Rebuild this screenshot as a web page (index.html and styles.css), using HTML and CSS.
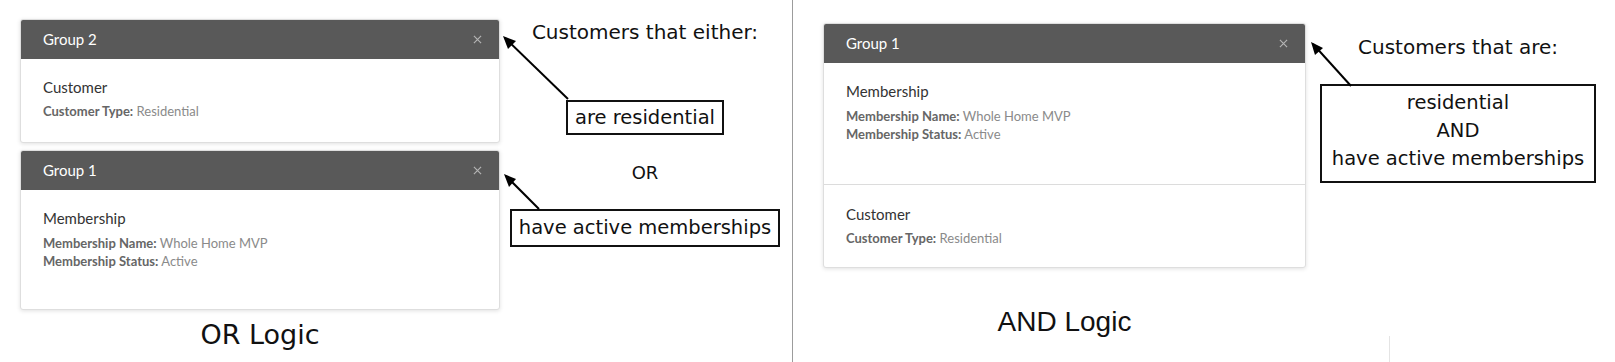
FILE: index.html
```html
<!DOCTYPE html>
<html lang="en">
<head>
    <meta charset="UTF-8">
    <meta name="viewport" content="width=device-width, initial-scale=1.0">
    <title>Segment Logic - OR vs AND</title>
    <link rel="stylesheet" href="styles.css">
</head>
<body>
    <div class="board">
        <!-- OR logic: two separate groups -->
        <section class="panel panel-or">
            <div class="stack">
                <div class="group-card">
                    <div class="group-header">
                        <span>Group 2</span>
                        <svg class="close-icon" viewBox="0 0 10 10"><path d="M1 1 L9 9 M9 1 L1 9"/></svg>
                    </div>
                    <div class="group-section">
                        <div class="section-title">Customer</div>
                        <div class="detail"><b>Customer Type:</b> Residential</div>
                    </div>
                </div>
                <div class="group-card">
                    <div class="group-header">
                        <span>Group 1</span>
                        <svg class="close-icon" viewBox="0 0 10 10"><path d="M1 1 L9 9 M9 1 L1 9"/></svg>
                    </div>
                    <div class="group-section tall short">
                        <div class="section-title">Membership</div>
                        <div class="detail first"><b>Membership Name:</b> Whole Home MVP</div>
                        <div class="detail"><b>Membership Status:</b> Active</div>
                    </div>
                </div>
                <div class="caption caption-or">OR Logic</div>
            </div>
            <div class="notes notes-or">
                <div class="note-title">Customers that either:</div>
                <div class="note-box box-residential">are residential</div>
                <div class="note-or">OR</div>
                <div class="note-box box-members">have active memberships</div>
            </div>
        </section>

        <!-- AND logic: one group with two filters -->
        <section class="panel panel-and">
            <div class="stack stack-and">
                <div class="group-card">
                    <div class="group-header">
                        <span>Group 1</span>
                        <svg class="close-icon" viewBox="0 0 10 10"><path d="M1 1 L9 9 M9 1 L1 9"/></svg>
                    </div>
                    <div class="group-section tall">
                        <div class="section-title">Membership</div>
                        <div class="detail first"><b>Membership Name:</b> Whole Home MVP</div>
                        <div class="detail"><b>Membership Status:</b> Active</div>
                    </div>
                    <div class="group-section split">
                        <div class="section-title">Customer</div>
                        <div class="detail"><b>Customer Type:</b> Residential</div>
                    </div>
                </div>
                <div class="caption caption-and">AND Logic</div>
            </div>
            <div class="notes notes-and">
                <div class="note-title">Customers that are:</div>
                <div class="note-box box-and">residential<br>AND<br>have active memberships</div>
            </div>
            <div class="crop-edge"></div>
        </section>

        <!-- hand drawn arrows -->
        <svg class="arrows" width="1615" height="362" viewBox="0 0 1615 362">
            <g stroke="#000" stroke-width="2" fill="none">
                <line x1="568" y1="99" x2="505" y2="38"/>
                <line x1="539" y1="209" x2="506" y2="176"/>
                <line x1="1351" y1="86" x2="1313" y2="44"/>
            </g>
            <g fill="#000">
                <path d="M503 36 L516 41 L508 49 Z"/>
                <path d="M504 174 L516 179 L509 187 Z"/>
                <path d="M1311 42 L1323 48 L1315 55 Z"/>
            </g>
        </svg>
    </div>
</body>
</html>
```

FILE: styles.css
```css
* {
    margin: 0;
    padding: 0;
    box-sizing: border-box;
}

body {
    background-color: #fff;
    font-family: 'Lato', sans-serif;
    width: 1615px;
    height: 362px;
    overflow: hidden;
}

.board {
    position: relative;
    display: flex;
    height: 362px;
}

.panel {
    display: flex;
    align-items: flex-start;
    position: relative;
}

.panel-or {
    width: 792px;
    padding: 19px 0 0 20px;
}

.panel-and {
    flex: 1;
    border-left: 1px solid #9c9c9c;
    padding: 23px 0 0 30px;
}

.stack {
    width: 480px;
    display: flex;
    flex-direction: column;
}

.stack-and {
    width: 483px;
}

/* group cards */
.group-card {
    background-color: #fff;
    border: 1px solid #dedede;
    border-radius: 3px;
    box-shadow: 0 1px 4px rgba(0, 0, 0, 0.12);
    margin-bottom: 7px;
    overflow: hidden;
}

.group-header {
    display: flex;
    justify-content: space-between;
    align-items: center;
    height: 39px;
    padding: 0 17px 1px 22px;
    background-color: #595959;
    color: #fff;
    font-size: 15px;
}

.close-icon {
    width: 9px;
    height: 9px;
    stroke: #b4b4b4;
    stroke-width: 1.3;
    fill: none;
}

.group-section {
    padding: 18px 22px 22px;
}

.group-section.tall {
    padding-bottom: 41px;
}

.group-section.tall.short {
    padding-bottom: 39px;
}

.group-section.split {
    border-top: 1px solid #dcdcdc;
    padding-top: 19px;
    padding-bottom: 20px;
}

.section-title {
    color: #333;
    font-size: 15px;
    line-height: 20px;
}

.detail {
    color: #8a8a8a;
    font-size: 13px;
    line-height: 18px;
    margin-top: 5px;
}

.detail.first {
    margin-top: 6px;
}

.detail + .detail {
    margin-top: 0;
}

.detail b {
    color: #666;
    font-weight: 700;
}

.caption {
    text-align: center;
    color: #111;
}

.caption-or {
    font-family: 'DejaVu Sans', sans-serif;
    font-size: 27px;
    line-height: 30px;
    margin-top: 3px;
}

.caption-and {
    font-family: 'Liberation Sans', Arial, sans-serif;
    font-size: 28px;
    line-height: 32px;
    margin-top: 31px;
}

/* annotations */
.notes {
    display: flex;
    flex-direction: column;
    align-items: center;
    font-family: 'DejaVu Sans', sans-serif;
    color: #111;
}

.notes-or {
    width: 290px;
    padding-top: 1px;
}

.notes-and {
    width: 304px;
    padding-top: 12px;
}

.note-title {
    font-size: 20px;
    line-height: 24px;
}

.note-box {
    border: 2px solid #111;
    font-size: 19.5px;
    line-height: 24px;
    text-align: center;
}

.box-residential {
    margin-top: 56px;
    padding: 4px 7px 3px;
}

.note-or {
    font-size: 18px;
    line-height: 22px;
    margin-top: 27px;
}

.box-members {
    margin-top: 25px;
    padding: 5px 7px;
}

.box-and {
    margin-top: 25px;
    line-height: 28px;
    padding: 3px 10px 8px;
}

.crop-edge {
    position: absolute;
    left: 596px;
    top: 336px;
    width: 1px;
    height: 26px;
    background-color: #e4e4e4;
}

.arrows {
    position: absolute;
    top: 0;
    left: 0;
    pointer-events: none;
}
```
